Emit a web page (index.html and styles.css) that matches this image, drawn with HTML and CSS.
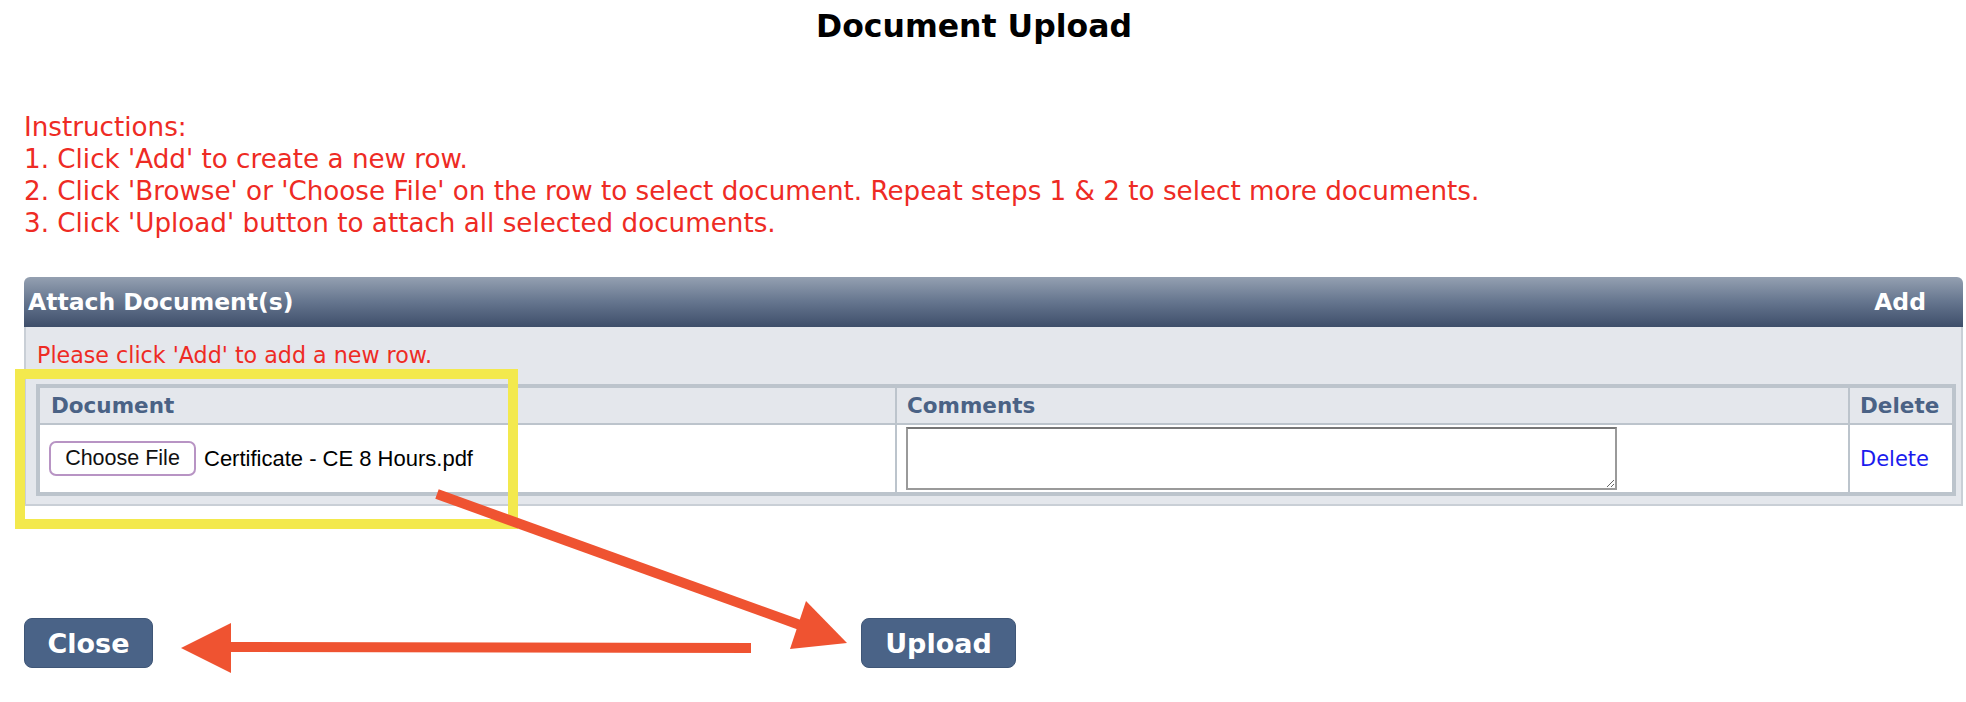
FILE: index.html
```html
<!DOCTYPE html>
<html>
<head>
<meta charset="utf-8">
<title>Document Upload</title>
<link rel="stylesheet" href="styles.css">
</head>
<body>
<div class="page">
  <h1 class="title">Document Upload</h1>
  <div class="instructions">
    <div>Instructions:</div>
    <div>1. Click 'Add' to create a new row.</div>
    <div>2. Click 'Browse' or 'Choose File' on the row to select document. Repeat steps 1 &amp; 2 to select more documents.</div>
    <div>3. Click 'Upload' button to attach all selected documents.</div>
  </div>

  <div class="panel">
    <div class="panel-head">
      <span class="panel-title">Attach Document(s)</span>
      <span class="panel-add">Add</span>
    </div>
    <div class="panel-body">
      <div class="msg">Please click 'Add' to add a new row.</div>
      <table class="grid">
        <thead>
          <tr>
            <th class="c-doc">Document</th>
            <th class="c-com">Comments</th>
            <th class="c-del">Delete</th>
          </tr>
        </thead>
        <tbody>
          <tr>
            <td class="d-doc"><span class="file"><button class="choose" type="button">Choose File</button><span class="fname">Certificate - CE 8 Hours.pdf</span></span></td>
            <td class="d-com"><textarea class="comment"></textarea></td>
            <td class="d-del"><a class="del-link" href="#">Delete</a></td>
          </tr>
        </tbody>
      </table>
    </div>
  </div>

  <div class="actions">
    <button class="btn btn-close" type="button">Close</button>
    <button class="btn btn-upload" type="button">Upload</button>
  </div>
</div>

<div class="highlight"></div>
<svg class="arrows" width="1966" height="702" viewBox="0 0 1966 702">
  <line x1="437" y1="494" x2="800" y2="625" stroke="#ef5331" stroke-width="10"/>
  <polygon points="806,601 790,649 847,643" fill="#ef5331"/>
  <line x1="751" y1="648" x2="228" y2="647" stroke="#ef5331" stroke-width="10"/>
  <polygon points="181,648 231,623 231,673" fill="#ef5331"/>
</svg>
</body>
</html>
```

FILE: styles.css
```css
html, body {
  margin: 0;
  padding: 0;
  background: #ffffff;
}
body {
  font-family: "DejaVu Sans", Verdana, sans-serif;
  position: relative;
  width: 1966px;
  height: 702px;
  overflow: hidden;
}
.page {
  padding: 8px 3px 0 24px;
}
.title {
  margin: 0;
  padding-right: 39px;
  text-align: center;
  font-size: 31.5px;
  font-weight: bold;
  line-height: 37px;
  color: #000;
}
.instructions {
  margin-top: 66px;
  color: #ee2b24;
  font-size: 26.2px;
  line-height: 32px;
}
.panel {
  margin-top: 38px;
}
.panel-head {
  height: 50px;
  border-radius: 6px 6px 0 0;
  background: linear-gradient(#94a0b1, #65758e 50%, #3e4e6a);
  display: flex;
  align-items: center;
  justify-content: space-between;
  padding: 0 37px 0 4px;
  color: #fff;
  font-weight: bold;
  font-size: 23.5px;
}
.panel-body {
  background: #e4e7ec;
  border: 2px solid #c9cfd6;
  border-top: 0;
  padding: 15px 5px 8px 10px;
}
.msg {
  color: #ee2b24;
  font-size: 22.2px;
  line-height: 26px;
  margin-left: 1px;
  margin-bottom: 16px;
}
.grid {
  width: 1920px;
  table-layout: fixed;
  border-collapse: separate;
  border-spacing: 0;
  border: 3px solid #bcc4cc;
}
.grid th, .grid td {
  border: 1px solid #bcc4cc;
  box-sizing: border-box;
  text-align: left;
}
.grid th {
  background: #e4e7ec;
  color: #4a6285;
  font-size: 21.5px;
  line-height: 25px;
  padding: 5px 10px;
  font-weight: bold;
}
.c-doc { width: 857px; }
.c-com { width: 953px; }
.c-del { width: 104px; }
.grid th.c-doc { padding-left: 11px; }
.grid td {
  background: #fff;
  padding: 2px 9px 2px;
  vertical-align: middle;
}
.grid td.d-del { padding-left: 10px; }
.file {
  display: flex;
  align-items: center;
  gap: 8px;
  font-family: "Liberation Sans", Arial, sans-serif;
  font-size: 22px;
  color: #000;
}
.choose {
  width: 147px;
  height: 35px;
  border: 2px solid #b894c4;
  border-radius: 7px;
  background: #fff;
  font-family: "Liberation Sans", Arial, sans-serif;
  font-size: 21.5px;
  color: #111;
  padding: 0;
}
.comment {
  display: block;
  width: 711px;
  height: 63px;
  box-sizing: border-box;
  margin: 0;
  border: 2px solid #9a9a9a;
  border-top-color: #777;
  background: #fff;
}
.del-link {
  color: #1a1aee;
  text-decoration: none;
  font-size: 21px;
}
.actions {
  margin-top: 112px;
  display: flex;
  gap: 708px;
}
.btn {
  height: 50px;
  border: 1px solid #3f5677;
  border-radius: 8px;
  background: #4a6387;
  color: #fff;
  font-family: "DejaVu Sans", Verdana, sans-serif;
  font-weight: bold;
  font-size: 27px;
  padding: 0;
}
.btn-close { width: 129px; }
.btn-upload { width: 155px; }
.highlight {
  position: absolute;
  left: 15px;
  top: 369px;
  width: 483px;
  height: 140px;
  border: 10px solid #f3e94d;
}
.arrows {
  position: absolute;
  left: 0;
  top: 0;
}
```
